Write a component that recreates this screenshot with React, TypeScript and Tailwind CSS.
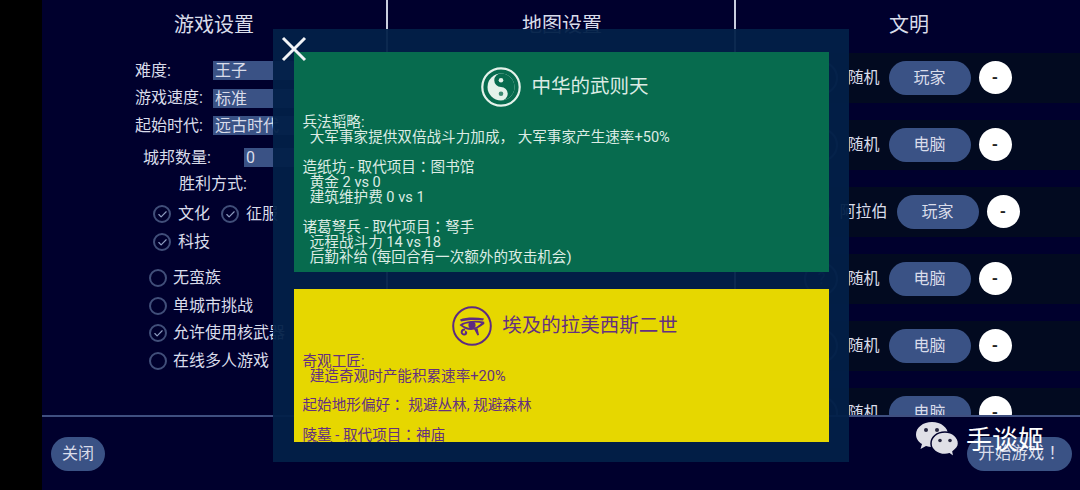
import { Check } from "lucide-react";

const greenText = `兵法韬略:
  大军事家提供双倍战斗力加成， 大军事家产生速率+50%

造纸坊 - 取代项目：图书馆
  黄金 2 vs 0
  建筑维护费 0 vs 1

诸葛弩兵 - 取代项目：弩手
  远程战斗力 14 vs 18
  后勤补给 (每回合有一次额外的攻击机会)`;

const yellowText = `奇观工匠:
  建造奇观时产能积累速率+20%

起始地形偏好： 规避丛林, 规避森林

陵墓 - 取代项目：神庙
  生产力 2 vs 0`;

const players = [
    { name: "随机", kind: "玩家" },
    { name: "随机", kind: "电脑" },
    { name: "阿拉伯", kind: "玩家" },
    { name: "随机", kind: "电脑" },
    { name: "随机", kind: "电脑" },
    { name: "随机", kind: "电脑" },
];

// the game's font centres full-width punctuation, the TC face does the same
function Centered({ text }: { text: string }) {
    return (
        <>
            {text.split(/([：！])/).map((part, i) =>
                part === "：" || part === "！" ? (
                    <span key={i} className="font-['Noto_Sans_CJK_TC',sans-serif] leading-[0]">{part}</span>
                ) : (
                    part
                )
            )}
        </>
    );
}

function Tick({ on }: { on?: boolean }) {
    return (
        <span className="flex h-[18px] w-[18px] shrink-0 items-center justify-center rounded-full border-2 border-[#414f7a]">
            {on && <Check size={11} strokeWidth={2.5} className="text-[#8d9cc0]" />}
        </span>
    );
}

function SelectRow({ label, value }: { label: string; value: string }) {
    return (
        <div className="flex h-[19px] items-center pl-[93px]">
            <span className="w-[78px] shrink-0 whitespace-nowrap">{label}</span>
            <span className="h-[19px] w-[120px] bg-[#3a5285] pl-[2px] text-[16px] leading-[19px] whitespace-nowrap">{value}</span>
        </div>
    );
}

function Option({ label, on }: { label: string; on?: boolean }) {
    return (
        <div className="flex h-[20px] items-center gap-[6px] whitespace-nowrap">
            <Tick on={on} />
            <span>{label}</span>
        </div>
    );
}

function YinYang() {
    return (
        <svg width="40" height="40" viewBox="0 0 40 40" className="shrink-0">
            <circle cx="20" cy="20" r="18.7" fill="none" stroke="#e4f2ea" strokeWidth="2.2" />
            <circle cx="20" cy="20" r="13.5" fill="#e4f2ea" />
            <path d="M20 6.5A13.5 13.5 0 0 1 20 33.500A6.750 6.750 0 0 0 20 20A6.750 6.750 0 0 1 20 6.500Z" fill="#076b4e" />
            <circle cx="20" cy="13.250" r="2.300" fill="#e4f2ea" />
            <circle cx="20" cy="26.750" r="2.300" fill="#3d8a72" />
        </svg>
    );
}

function EyeOfHorus() {
    return (
        <svg width="40" height="40" viewBox="0 0 40 40" className="shrink-0">
            <circle cx="20" cy="20" r="18.800" fill="none" stroke="#5d2a82" strokeWidth="2" />
            <path d="M8 13.500C14 11 24 11 32 12.500L31 14.500C24 13.500 14 14 9 15.500Z" fill="#5d2a82" />
            <path d="M9 19C14 15.500 24 15 31 16.500C27 21 23 23 19 23C15 23 12 21.500 9 19Z" fill="none" stroke="#5d2a82" strokeWidth="1.800" />
            <circle cx="20" cy="19" r="3.600" fill="#5d2a82" />
            <path d="M13 23.500C9 23.500 8.500 28 12 28.500C14.500 28.800 15 26 13 25.500" fill="none" stroke="#5d2a82" strokeWidth="2" />
            <path d="M22 23L25.500 29.500L27 29L25.500 22Z" fill="#5d2a82" />
            <path d="M26 21C28 20 30 18.500 32 17" fill="none" stroke="#5d2a82" strokeWidth="1.800" />
        </svg>
    );
}

function WeChat() {
    return (
        <svg width="44" height="38" viewBox="0 0 44 38">
            <path d="M17 1C8 1 1 6.500 1 13.500C1 17.500 3.500 21 7 23L5.500 28L11 25C13 25.700 15 26 17 26C26 26 33 20.500 33 13.500C33 6.500 26 1 17 1Z" fill="#dfdfe6" />
            <path d="M30 11C21.500 11 16 16.500 16 22.500C16 28.500 22 33.500 30 33.500C31.500 33.500 33 33.300 34.500 32.800L39 36L38 30.500C41 28.500 43.500 26 43.500 22.500C43.500 16.500 38 11 30 11Z" fill="#dfdfe6" stroke="#00002d" strokeWidth="1.500" />
            <circle cx="11" cy="9" r="2" fill="#26263f" />
            <circle cx="22" cy="9" r="2" fill="#26263f" />
            <circle cx="25" cy="19.500" r="1.800" fill="#26263f" />
            <circle cx="35" cy="19.500" r="1.800" fill="#26263f" />
        </svg>
    );
}

function Card({ box, icon, title, text, textBox }: { box: string; icon: React.ReactNode; title: string; text: string; textBox: string }) {
    return (
        <section className={`${box} shrink-0 overflow-hidden px-[8.500px]`}>
            <div className="flex h-[40px] items-center justify-center gap-[10px] pl-[7px]">
                {icon}
                <h2 className="text-[19.500px] font-normal">{title}</h2>
            </div>
            <p className={`${textBox} text-[14.600px] whitespace-pre-wrap`}>
                <Centered text={text} />
            </p>
        </section>
    );
}

export default function App() {
    return (
        <main className="flex h-[490px] w-[1080px] overflow-hidden bg-black font-[Roboto,'Noto_Sans_CJK_SC',sans-serif] text-[16px] text-[#d9dcea]">
            <div className="w-[42px] shrink-0" />
            <div className="relative flex flex-1 flex-col bg-[#00002d]">
                <div className="flex h-[417px] shrink-0 border-b-2 border-[#3f4f80]">
                    <div className="w-[346px] border-r-2 border-[#c9cede]">
                        <h1 className="h-[50px] text-center text-[20px] leading-[50px] font-normal">游戏设置</h1>
                        <div className="mt-[11px] flex flex-col gap-[8.500px]">
                            <SelectRow label="难度:" value="王子" />
                            <SelectRow label="游戏速度:" value="标准" />
                            <SelectRow label="起始时代:" value="远古时代" />
                        </div>
                        <div className="mt-[13px] flex h-[19px] items-center pl-[101px]">
                            <span className="w-[101px] shrink-0">城邦数量:</span>
                            <span className="h-[19px] w-[80px] bg-[#3a5285] pl-[2px] leading-[19px]">0</span>
                        </div>
                        <p className="mt-[7px] pl-[137px] leading-[20px]">胜利方式:</p>
                        <div className="mt-[10px] flex gap-[11px] pl-[111px]">
                            <div className="flex h-[20px] items-center gap-[7px] whitespace-nowrap"><Tick on /><span>文化</span></div>
                            <div className="flex h-[20px] items-center gap-[7px] whitespace-nowrap"><Tick on /><span>征服</span></div>
                        </div>
                        <div className="mt-[8px] flex h-[20px] items-center gap-[7px] pl-[111px] whitespace-nowrap">
                            <Tick on />
                            <span>科技</span>
                        </div>
                        <div className="mt-[16px] flex flex-col gap-[7.500px] pl-[107px]">
                            <Option label="无蛮族" />
                            <Option label="单城市挑战" />
                            <Option label="允许使用核武器" on />
                            <Option label="在线多人游戏" />
                        </div>
                    </div>
                    <div className="w-[348px] border-r-2 border-[#c9cede]">
                        <h1 className="h-[50px] pl-[2px] text-center text-[20px] leading-[50px] font-normal">地图设置</h1>
                    </div>
                    <div className="min-w-0 flex-1 overflow-hidden">
                        <h1 className="h-[50px] pl-[2px] text-center text-[20px] leading-[50px] font-normal">文明</h1>
                        <div className="mt-[2.500px] flex flex-col gap-[17px]">
                            {players.map((p, i) => (
                                <div key={i} className="flex h-[50px] shrink-0 items-center justify-center bg-[#020a20]">
                                    <span className="flex h-[34px] w-[34px] items-center justify-center rounded-full border-2 border-[#46557f] text-[#46557f]">?</span>
                                    <span className="ml-[9px] whitespace-nowrap">{p.name}</span>
                                    <button className="ml-[9px] h-[34px] w-[82px] rounded-full bg-[#3a5285] text-[#d9dcea]">{p.kind}</button>
                                    <span className="ml-[8px] flex h-[33px] w-[33px] items-center justify-center rounded-full bg-white font-bold text-[#222]">-</span>
                                </div>
                            ))}
                        </div>
                    </div>
                </div>
                <div className="flex flex-1 items-start justify-between pt-[20px] pr-[8px] pl-[9px]">
                    <button className="h-[34px] w-[54px] rounded-full bg-[#3a5285]">关闭</button>
                    <button className="h-[34px] w-[105px] rounded-full bg-[#3a5285] text-[16.500px]">
                        <Centered text="开始游戏！" />
                    </button>
                </div>

                <div className="absolute top-[29px] left-[231px] flex h-[433px] w-[576px] flex-col gap-[17px] bg-[#022048]/95 pt-[23px] pr-[20px] pb-[20px] pl-[21px]">
                    <Card box="h-[220px] bg-[#076b4e] pt-[15px] text-[#dcebe4]" textBox="mt-[8px] leading-[15px]" icon={<YinYang />} title="中华的武则天" text={greenText} />
                    <Card box="h-[153px] bg-[#e6d700] pt-[17px] text-[#643080]" textBox="mt-[8px] leading-[14.700px]" icon={<EyeOfHorus />} title="埃及的拉美西斯二世" text={yellowText} />
                </div>
                <svg width="26" height="26" viewBox="0 0 26 26" className="absolute top-[36px] left-[239px]">
                    <path d="M2 2L24 24M24 2L2 24" stroke="#f2f4f8" strokeWidth="3" />
                </svg>

                <div className="absolute top-[421px] left-[873px] flex items-center gap-[7px] text-white">
                    <WeChat />
                    <span className="text-[26px] leading-[38px] whitespace-nowrap">手谈姬</span>
                </div>
            </div>
        </main>
    );
}
